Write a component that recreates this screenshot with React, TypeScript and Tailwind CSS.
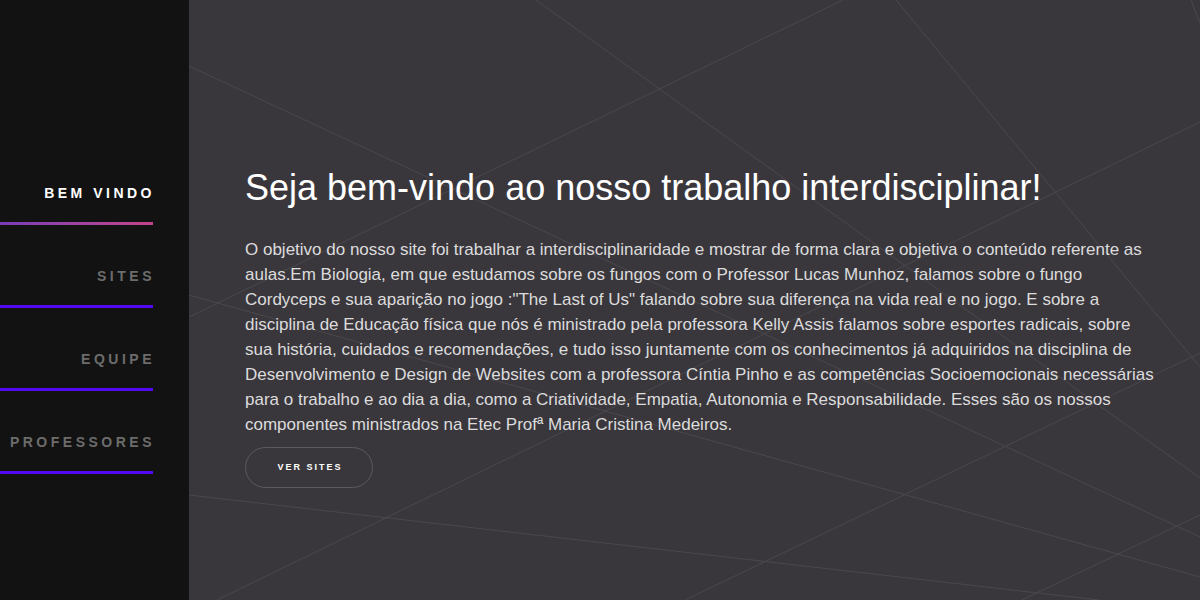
import React from 'react';

const navItems = [
  { label: 'BEM VINDO', active: true },
  { label: 'SITES', active: false },
  { label: 'EQUIPE', active: false },
  { label: 'PROFESSORES', active: false },
];

// background link lines, in coords of the main panel (page x - 189)
const lines: [number, number, number, number][] = [
  [0, 66, 1011, 537],
  [347, 0, 1011, 478],
  [654, 0, 0, 317],
  [707, 0, 1204, 600],
  [1002, 0, 1011, 23],
  [1011, 122, 28, 600],
  [0, 495, 910, 600],
  [1011, 353, 496, 600],
  [0, 295, 1011, 577],
  [833, 600, 1011, 515],
];

const paragraph = [
  'O objetivo do nosso site foi trabalhar a interdisciplinaridade e mostrar de forma clara e objetiva o conteúdo referente as',
  'aulas.Em Biologia, em que estudamos sobre os fungos com o Professor Lucas Munhoz, falamos sobre o fungo',
  'Cordyceps e sua aparição no jogo :"The Last of Us" falando sobre sua diferença na vida real e no jogo. E sobre a',
  'disciplina de Educação física que nós é ministrado pela professora Kelly Assis falamos sobre esportes radicais, sobre',
  'sua história, cuidados e recomendações, e tudo isso juntamente com os conhecimentos já adquiridos na disciplina de',
  'Desenvolvimento e Design de Websites com a professora Cíntia Pinho e as competências Socioemocionais necessárias',
  'para o trabalho e ao dia a dia, como a Criatividade, Empatia, Autonomia e Responsabilidade. Esses são os nossos',
  'componentes ministrados na Etec Profª Maria Cristina Medeiros.',
];

export default function App() {
  return (
    <div className="flex w-[1200px] h-[600px] overflow-hidden" style={{ fontFamily: '"Liberation Sans", Arial, sans-serif' }}>
      <aside className="w-[189px] shrink-0 bg-[#121212] pt-[185px]">
        <nav className="w-[153px] flex flex-col">
          {navItems.map(item => (
            <div key={item.label} className="flex flex-col mb-[43px]">
              <span
                className={`text-right text-[14px] leading-[16px] font-bold tracking-[3.5px] mr-[-2px] ${item.active ? 'text-white' : 'text-[#6c6c6c]'}`}
              >
                {item.label}
              </span>
              <div
                className={`mt-[21px] h-[3px] w-full ${item.active ? 'bg-gradient-to-r from-[#7a3bb8] to-[#c4428a]' : 'bg-[#5208f2]'}`}
              />
            </div>
          ))}
        </nav>
      </aside>

      <main className="relative flex-1 bg-[#3a373c]">
        <svg className="absolute inset-0 w-full h-full" viewBox="0 0 1011 600" preserveAspectRatio="none">
          {lines.map(([x1, y1, x2, y2], i) => (
            <line key={i} x1={x1} y1={y1} x2={x2} y2={y2} stroke="#4b484d" strokeWidth="1" />
          ))}
        </svg>

        <div className="relative pl-[56px] pt-[166px]">
          <h1 className="text-[36px] leading-[43px] text-white font-normal">
            Seja bem-vindo ao nosso trabalho interdisciplinar!
          </h1>
          <p className="mt-[28px] text-[17px] leading-[25px] text-[#dcdcdc] whitespace-nowrap">
            {paragraph.map((line, i) => (
              <React.Fragment key={i}>
                {line}
                {i < paragraph.length - 1 && <br />}
              </React.Fragment>
            ))}
          </p>
          <button className="mt-[10px] w-[128px] h-[41px] rounded-full border border-[#5c5a5e] text-white text-[9px] font-bold tracking-[2px] pl-[2px]">
            VER SITES
          </button>
        </div>
      </main>
    </div>
  );
}
